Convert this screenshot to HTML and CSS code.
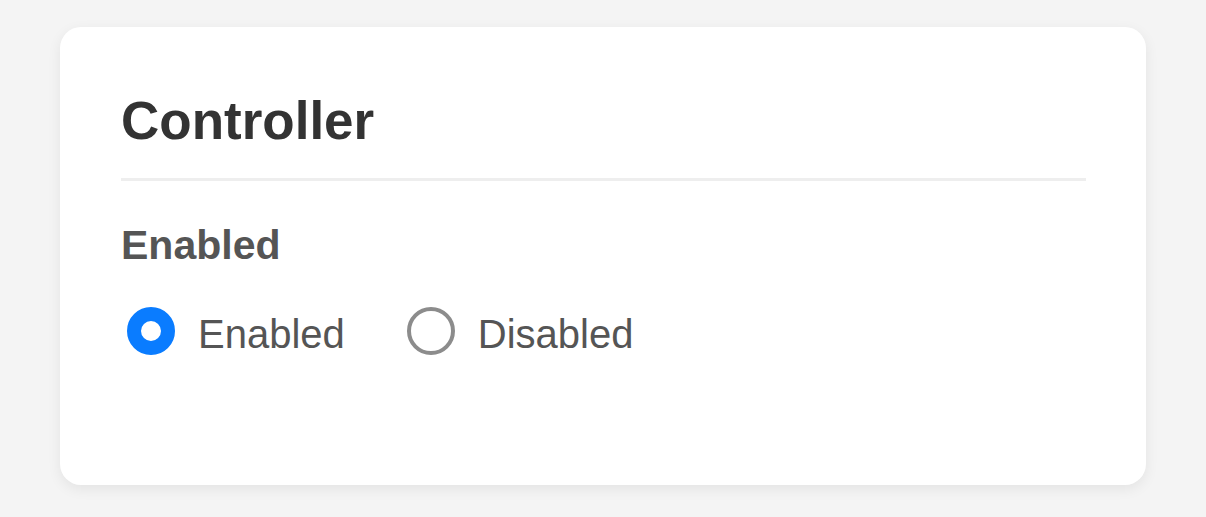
FILE: index.html
```html
<!DOCTYPE html>
<html lang="en">
<head>
<meta charset="utf-8">
<title>Controller</title>
<link rel="stylesheet" href="styles.css">
</head>
<body>
  <main class="page">
    <section class="card">
      <h1 class="card-title">Controller</h1>
      <div class="field">
        <div class="field-label">Enabled</div>
        <div class="radio-group">
          <label class="radio">
            <span class="radio-dot radio-dot--checked"></span>
            <span class="radio-text">Enabled</span>
          </label>
          <label class="radio">
            <span class="radio-dot"></span>
            <span class="radio-text">Disabled</span>
          </label>
        </div>
      </div>
    </section>
  </main>
</body>
</html>
```

FILE: styles.css
```css
html, body {
  margin: 0;
  padding: 0;
  background: #f4f4f4;
  font-family: "Liberation Sans", Arial, Helvetica, sans-serif;
}

.page {
  padding: 27px 60px;
}

.card {
  background: #ffffff;
  border-radius: 21px;
  box-shadow: 0 4px 14px rgba(0, 0, 0, 0.07);
  padding: 43px 60px 127px 61px;
  height: 288px;
}

.card-title {
  margin: 0;
  font-size: 53px;
  line-height: 60px;
  font-weight: 700;
  color: #333333;
  padding-bottom: 27px;
  border-bottom: 3px solid #eeeeee;
  padding-top: 21px;
}

.field {
  padding-top: 40px;
}

.field-label {
  font-size: 41px;
  line-height: 48px;
  font-weight: 700;
  color: #555555;
}

.radio-group {
  display: flex;
  align-items: center;
  gap: 56px;
  margin-top: 35px;
}

.radio {
  display: flex;
  align-items: center;
  gap: 23px;
}

.radio-dot {
  box-sizing: border-box;
  width: 48px;
  height: 48px;
  margin-left: 6px;
  border-radius: 50%;
  border: 4px solid #8c8c8c;
  background: #ffffff;
}

.radio-dot--checked {
  border: 14px solid #0a7cff;
}

.radio-text {
  font-size: 40px;
  line-height: 48px;
  padding-top: 6px;
  color: #555555;
}
```
